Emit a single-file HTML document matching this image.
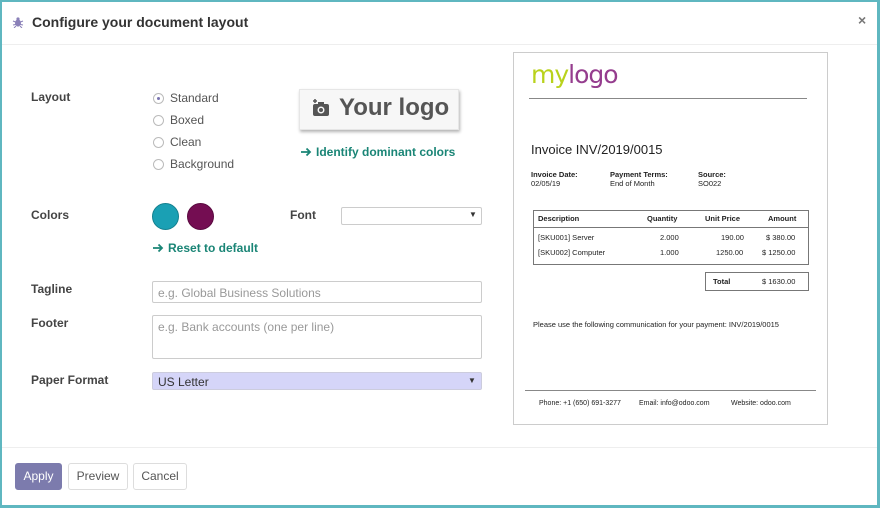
<!DOCTYPE html>
<html><head><style>
*{margin:0;padding:0;box-sizing:border-box}
body{width:880px;height:508px;background:#fff;font-family:"Liberation Sans",sans-serif;position:relative;overflow:hidden;color:#333}
.frame{position:absolute;left:0;top:0;width:880px;height:508px;border:2px solid #5fb7c0;border-right-width:3px;border-bottom-width:3px}
.a{position:absolute;white-space:nowrap}
.lbl{font-size:12px;font-weight:bold;color:#444}
.radio{position:absolute;width:11px;height:11px;border:1px solid #bbb;border-radius:50%;background:#fff}
.rl{font-size:12px;color:#555}
.inp{position:absolute;border:1px solid #ccc;border-radius:2px;background:#fff;font-size:12px;color:#999;padding:4px 5px}
.link{font-size:12px;font-weight:bold;color:#1a8576}
.arr{display:inline-block;vertical-align:-1px;margin-right:4px}
.btn{position:absolute;top:463px;height:27px;border:1px solid #ddd;border-radius:3px;font-size:12px;color:#555;text-align:center;line-height:25px;background:#fff}
.doc{font-family:"Liberation Sans",sans-serif;color:#222}
.s{font-size:7.5px}
</style></head><body>
<svg class="a" style="left:12px;top:16px" width="12" height="12" viewBox="0 0 12 12"><ellipse cx="6" cy="7" rx="3" ry="3.6" fill="#8a80b8"/><circle cx="6" cy="3" r="1.6" fill="#8a80b8"/><path d="M1 5L3.5 6M1 9L3.5 8.5M11 5L8.5 6M11 9L8.5 8.5M2 12L4 10M10 12L8 10" stroke="#8a80b8" stroke-width="1"/></svg>
<div class="a" style="left:32px;top:14px;font-size:14px;font-weight:bold;color:#333">Configure your document layout</div>
<div class="a" style="left:858px;top:12px;font-size:14px;font-weight:bold;color:#777">×</div>
<div class="a" style="left:2px;top:44px;width:875px;height:1px;background:#eee"></div>

<div class="a lbl" style="left:31px;top:90px">Layout</div>
<div class="radio" style="left:153px;top:93px"></div><div class="a" style="left:157px;top:97px;width:3px;height:3px;border-radius:50%;background:#7a75b0"></div>
<div class="a rl" style="left:170px;top:91px">Standard</div>
<div class="radio" style="left:153px;top:115px"></div><div class="a rl" style="left:170px;top:113px">Boxed</div>
<div class="radio" style="left:153px;top:137px"></div><div class="a rl" style="left:170px;top:135px">Clean</div>
<div class="radio" style="left:153px;top:159px"></div><div class="a rl" style="left:170px;top:157px">Background</div>

<div class="a" style="left:299px;top:89px;width:160px;height:41px;background:#f7f7f7;border:1px solid #e6e6e6;box-shadow:1px 2px 3px rgba(0,0,0,.3)"></div>
<svg class="a" style="left:311px;top:99px" width="20" height="18" viewBox="0 0 20 18"><path d="M2 2h4M4 0v4" stroke="#555" stroke-width="1.5"/><rect x="2" y="5" width="16" height="12" rx="2" fill="#555"/><rect x="7" y="3" width="6" height="3" fill="#555"/><circle cx="10" cy="11" r="3.5" fill="#f7f7f7"/><circle cx="10" cy="11" r="2" fill="#555"/></svg>
<div class="a" style="left:339px;top:94px;font-size:24px;font-weight:bold;color:#555">Your logo</div>
<div class="a link" style="left:301px;top:145px"><svg class="arr" width="11" height="10" viewBox="0 0 11 10"><path d="M0 5H9M5.5 1.5L9 5L5.5 8.5" stroke="#1a8576" stroke-width="1.8" fill="none"/></svg>Identify dominant colors</div>

<div class="a lbl" style="left:31px;top:208px">Colors</div>
<div class="a" style="left:152px;top:203px;width:27px;height:27px;border-radius:50%;background:#1aa0b4;border:1px solid #14808f"></div>
<div class="a" style="left:187px;top:203px;width:27px;height:27px;border-radius:50%;background:#740d52;border:1px solid #5a0a40"></div>
<div class="a lbl" style="left:290px;top:208px">Font</div>
<div class="inp" style="left:341px;top:207px;width:141px;height:18px"></div>
<div class="a" style="left:469px;top:210px;font-size:8px;color:#333">▼</div>
<div class="a link" style="left:153px;top:241px"><svg class="arr" width="11" height="10" viewBox="0 0 11 10"><path d="M0 5H9M5.5 1.5L9 5L5.5 8.5" stroke="#1a8576" stroke-width="1.8" fill="none"/></svg>Reset to default</div>

<div class="a lbl" style="left:31px;top:282px">Tagline</div>
<div class="inp" style="left:152px;top:281px;width:330px;height:22px">e.g. Global Business Solutions</div>
<div class="a lbl" style="left:31px;top:316px">Footer</div>
<div class="inp" style="left:152px;top:315px;width:330px;height:44px">e.g. Bank accounts (one per line)</div>
<div class="a lbl" style="left:31px;top:373px">Paper Format</div>
<div class="inp" style="left:152px;top:372px;width:330px;height:18px;background:#d5d5f8;border-color:#ccd;color:#333;padding:2px 5px">US Letter</div>
<div class="a" style="left:468px;top:376px;font-size:8px;color:#333">▼</div>

<div class="a" style="left:2px;top:447px;width:875px;height:1px;background:#eee"></div>
<div class="btn" style="left:15px;width:47px;background:#7c7bad;border-color:#7c7bad;color:#fff">Apply</div>
<div class="btn" style="left:68px;width:60px">Preview</div>
<div class="btn" style="left:133px;width:54px">Cancel</div>

<div class="a doc" style="left:513px;top:52px;width:315px;height:373px;border:1px solid #ccc;background:#fff">
 <div class="a" style="left:17px;top:7px;font-size:25px;letter-spacing:-1px;font-family:'DejaVu Sans',sans-serif"><span style="color:#b9d21c">my</span><span style="color:#953d8e">logo</span></div>
 <div class="a" style="left:15px;top:45px;width:278px;height:1px;background:#888"></div>
 <div class="a" style="left:17px;top:89px;font-size:13px">Invoice INV/2019/0015</div>
 <div class="a s" style="left:17px;top:117px"><b>Invoice Date:</b><br>02/05/19</div>
 <div class="a s" style="left:96px;top:117px"><b>Payment Terms:</b><br>End of Month</div>
 <div class="a s" style="left:184px;top:117px"><b>Source:</b><br>SO022</div>
 <div class="a" style="left:19px;top:157px;width:276px;height:55px;border:1px solid #777"></div>
 <div class="a" style="left:19px;top:174px;width:276px;height:1px;background:#777"></div>
 <div class="a s" style="left:24px;top:161px"><b>Description</b></div>
 <div class="a s" style="left:133px;top:161px"><b>Quantity</b></div>
 <div class="a s" style="left:191px;top:161px"><b>Unit Price</b></div>
 <div class="a s" style="left:254px;top:161px"><b>Amount</b></div>
 <div class="a s" style="left:24px;top:180px">[SKU001] Server</div>
 <div class="a s" style="left:146px;top:180px">2.000</div>
 <div class="a s" style="left:207px;top:180px">190.00</div>
 <div class="a s" style="left:252px;top:180px">$ 380.00</div>
 <div class="a s" style="left:24px;top:195px">[SKU002] Computer</div>
 <div class="a s" style="left:146px;top:195px">1.000</div>
 <div class="a s" style="left:202px;top:195px">1250.00</div>
 <div class="a s" style="left:248px;top:195px">$ 1250.00</div>
 <div class="a" style="left:191px;top:219px;width:104px;height:19px;border:1px solid #777"></div>
 <div class="a s" style="left:199px;top:224px"><b>Total</b></div>
 <div class="a s" style="left:248px;top:224px">$ 1630.00</div>
 <div class="a s" style="left:19px;top:267px">Please use the following communication for your payment: INV/2019/0015</div>
 <div class="a" style="left:11px;top:337px;width:291px;height:1px;background:#888"></div>
 <div class="a s" style="left:25px;top:347px;font-size:7px">Phone: +1 (650) 691-3277</div>
 <div class="a s" style="left:125px;top:347px;font-size:7px">Email: info@odoo.com</div>
 <div class="a s" style="left:217px;top:347px;font-size:7px">Website: odoo.com</div>
</div>
<div class="frame"></div>
</body></html>
